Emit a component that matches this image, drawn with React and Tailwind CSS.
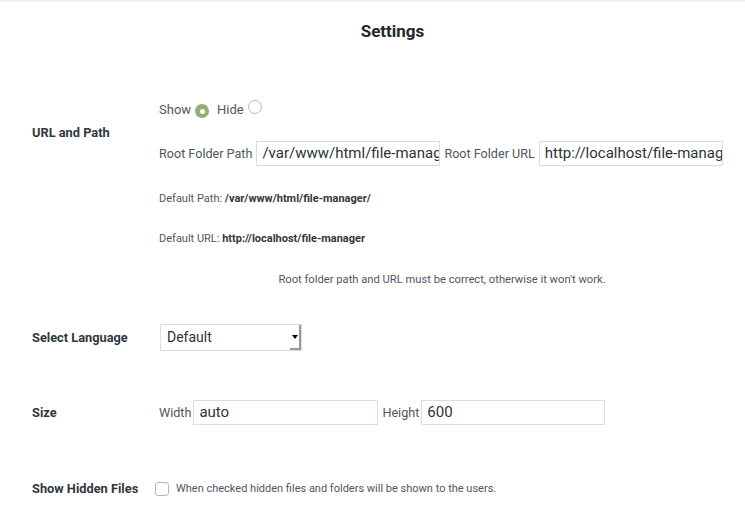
import React from "react";

const font = { fontFamily: "Roboto, 'Noto Sans', sans-serif" };

function Radio({ checked }) {
  return checked ? (
    <span className="inline-flex h-[14px] w-[14px] items-center justify-center rounded-full bg-[#8fb070]">
      <span className="h-[5px] w-[5px] rounded-full bg-white" />
    </span>
  ) : (
    <span className="inline-block h-[14px] w-[14px] rounded-full border border-[#b4b9be] bg-white" />
  );
}

function TextInput({ value, w }) {
  return (
    <div
      className={`flex h-[25px] shrink-0 items-center overflow-hidden whitespace-nowrap border border-[#dddddd] bg-white pl-[5px] text-[15px] text-[#2c3338] ${w}`}
    >
      {value}
    </div>
  );
}

export default function App() {
  return (
    <div className="min-h-[519px] w-[745px] bg-white" style={font}>
      <div className="h-[2px] bg-[#f0f0f1]" />
      <h1 className="mt-[19px] pl-[40px] text-center text-[17px] font-bold leading-[20px] text-[#23282d]">
        Settings
      </h1>

      <div className="pl-[32px] pr-[21px] text-[#50575e]">
        {/* URL and Path */}
        <div className="mt-[59px] flex">
          <div className="w-[127px] shrink-0 whitespace-nowrap pt-[25px] text-[12.8px] font-bold leading-[16px] text-[#32373c]">
            URL and Path
          </div>
          <div className="flex-1">
            <div className="flex h-[18px] items-center pt-[1px] text-[13px]">
              <span>Show</span>
              <span className="ml-[4px]"><Radio checked /></span>
              <span className="ml-[8px]">Hide</span>
              <span className="ml-[4px]"><Radio /></span>
            </div>
            <div className="mt-[23px] flex items-center whitespace-nowrap text-[12.6px]">
              <span className="pt-[1px]">Root Folder Path</span>
              <span className="ml-[4px]">
                <TextInput value="/var/www/html/file-manager/" w="w-[184px]" />
              </span>
              <span className="ml-[4px] pt-[1px]">Root Folder URL</span>
              <span className="ml-[4px]">
                <TextInput value="http://localhost/file-manager" w="w-[184px]" />
              </span>
            </div>
            <div className="mt-[25px] text-[11px] leading-[16px]">
              Default Path: <b className="text-[#32373c]">/var/www/html/file-manager/</b>
            </div>
            <div className="mt-[24px] text-[11px] leading-[16px]">
              Default URL: <b className="text-[#32373c]">http://localhost/file-manager</b>
            </div>
            <div className="mt-[25px] pl-[1px] text-center text-[11.2px] leading-[16px]">
              Root folder path and URL must be correct, otherwise it won't work.
            </div>
          </div>
        </div>

        {/* Select Language */}
        <div className="mt-[36px] flex items-center">
          <div className="w-[127px] shrink-0 whitespace-nowrap text-[12.8px] font-bold leading-[16px] text-[#32373c]">
            Select Language
          </div>
          <div className="ml-[1px] flex h-[27px] w-[142px] items-center border border-[#dddddd] bg-white">
            <span className="flex-1 pl-[6px] text-[14px] text-[#2c3338]">Default</span>
            <span className="relative flex h-full w-[11px] items-center justify-center border-r-2 border-b-2 border-[#9a9a9a]">
              <span className="h-0 w-0 border-x-[3px] border-t-[4px] border-x-transparent border-t-black" />
            </span>
          </div>
        </div>

        {/* Size */}
        <div className="mt-[49px] flex items-center">
          <div className="w-[127px] shrink-0 whitespace-nowrap text-[12.8px] font-bold leading-[16px] text-[#32373c]">
            Size
          </div>
          <div className="flex items-center whitespace-nowrap text-[12.6px]">
            <span className="pt-[2px]">Width</span>
            <span className="ml-[2px]">
              <TextInput value="auto" w="w-[185px]" />
            </span>
            <span className="ml-[4px] pt-[2px]">Height</span>
            <span className="ml-[2px]">
              <TextInput value="600" w="w-[184px]" />
            </span>
          </div>
        </div>

        {/* Show Hidden Files */}
        <div className="mt-[56px] flex items-center">
          <div className="w-[123px] shrink-0 whitespace-nowrap text-[12.8px] font-bold leading-[16px] text-[#32373c]">
            Show Hidden Files
          </div>
          <span className="inline-block h-[14px] w-[14px] shrink-0 rounded-[3px] border border-[#b4b9be] bg-white" />
          <span className="ml-[7px] whitespace-nowrap text-[11px] leading-[16px]">
            When checked hidden files and folders will be shown to the users.
          </span>
        </div>
      </div>
    </div>
  );
}
